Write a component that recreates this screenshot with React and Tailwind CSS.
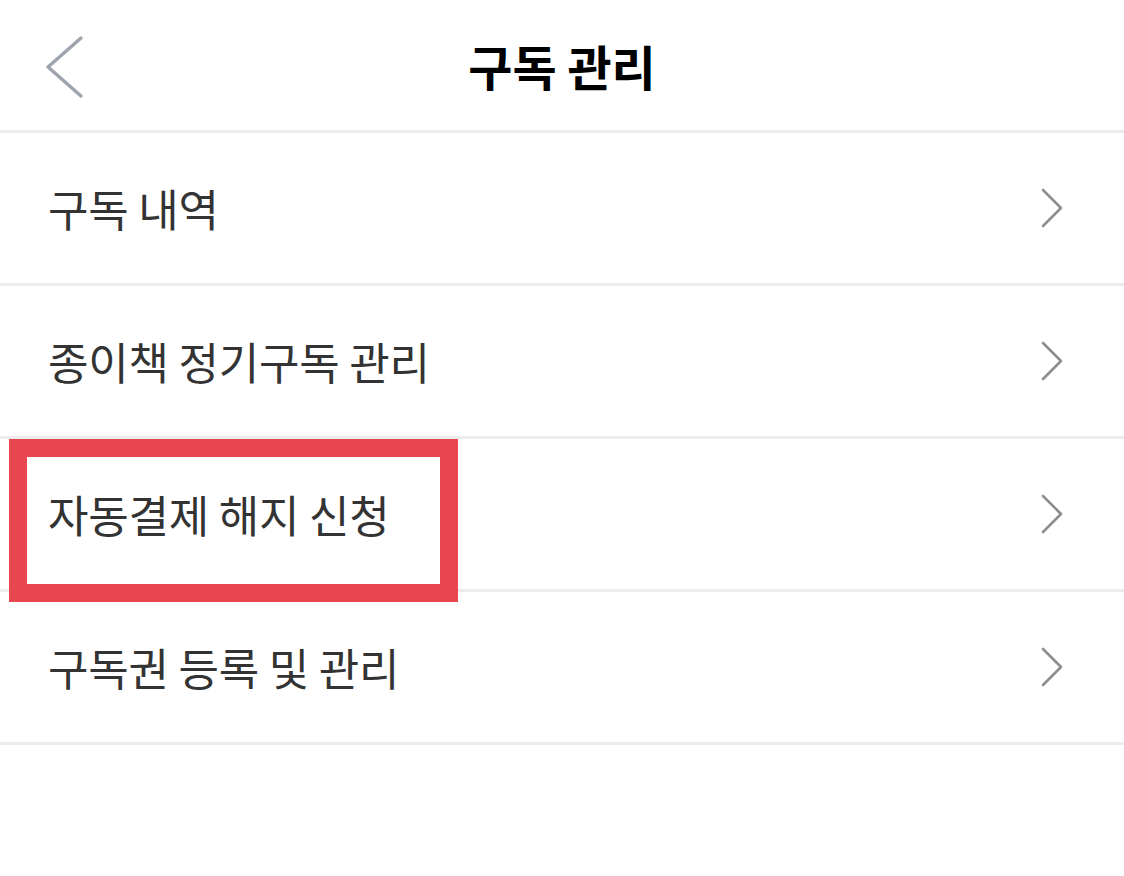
import React from "react";

const font = { fontFamily: '"Noto Sans CJK KR", "Noto Sans", sans-serif' };

function Chevron() {
  return (
    <svg width="24" height="40" viewBox="0 0 24 40" className="shrink-0">
      <path d="M3 2 L21 20 L3 38" fill="none" stroke="#8e8e8e" strokeWidth="2.6" strokeLinecap="round" strokeLinejoin="round" />
    </svg>
  );
}

function Row({ label, highlight }) {
  return (
    <div className="relative flex h-[153px] items-center justify-between border-b-[3px] border-[#ececec] pl-[48px] pr-[60px]">
      {highlight && (
        <div className="pointer-events-none absolute left-[9px] top-0 h-[163px] w-[449px] border-[18px] border-[#e8474f]" />
      )}
      <span className="relative text-[44px] tracking-[-0.2px] text-[#333333]">{label}</span>
      <Chevron />
    </div>
  );
}

export default function App() {
  return (
    <div className="h-[876px] w-[1124px] bg-white" style={font}>
      <div className="relative flex h-[133px] items-center justify-center border-b-[3px] border-[#ececec]">
        <svg width="44" height="66" viewBox="0 0 44 66" className="absolute left-[43px] top-[34px]">
          <path d="M38 4 L5 33 L38 62" fill="none" stroke="#9ea4ad" strokeWidth="3.4" strokeLinecap="round" strokeLinejoin="round" />
        </svg>
        <span className="text-[48px] font-bold tracking-[0px] text-black">구독 관리</span>
      </div>
      <Row label="구독 내역" />
      <Row label="종이책 정기구독 관리" />
      <Row label="자동결제 해지 신청" highlight />
      <Row label="구독권 등록 및 관리" />
    </div>
  );
}
